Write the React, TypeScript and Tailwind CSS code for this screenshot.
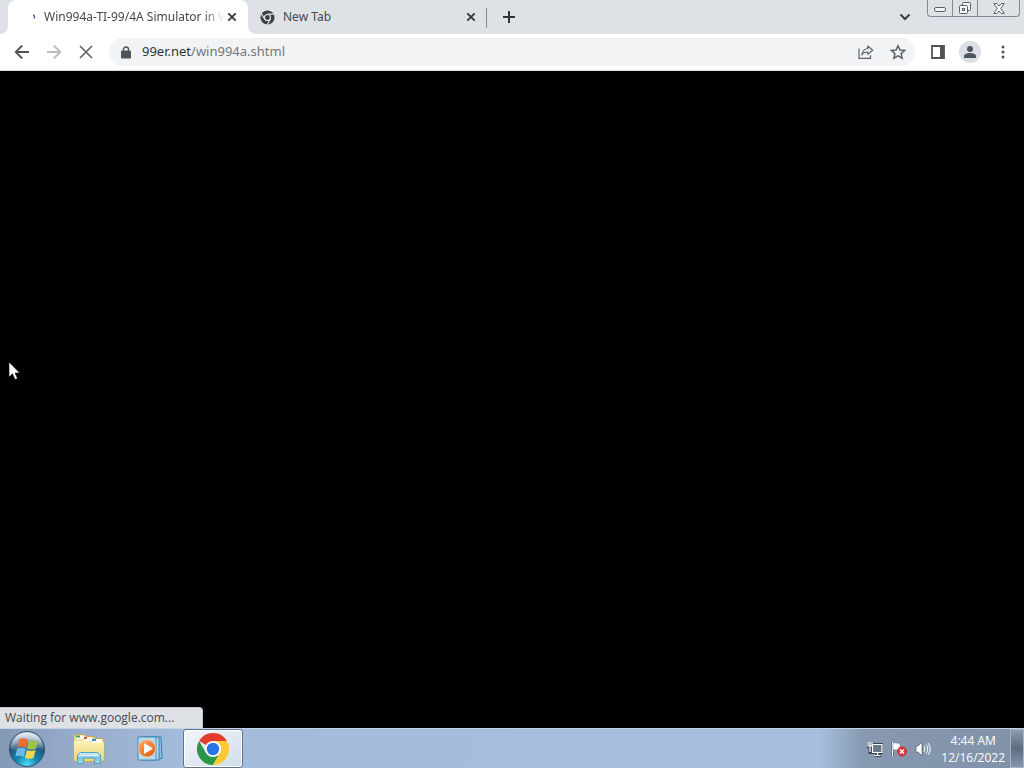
import type { ReactNode } from "react";

const stroke = {
  fill: "none",
  stroke: "currentColor",
  strokeWidth: 2,
} as const;

function IconButton({ label, className, children }: { label: string; className: string; children: ReactNode }) {
  return (
    <button type="button" aria-label={label} className={`flex shrink-0 items-center justify-center ${className}`}>
      {children}
    </button>
  );
}

function CloseIcon() {
  return (
    <svg width="10" height="10" viewBox="0 0 10 10" {...stroke}>
      <path d="M1.3 1.3l7.4 7.4M8.7 1.3L1.3 8.7" strokeWidth="1.8" />
    </svg>
  );
}

function TabStrip() {
  return (
    <header className="flex h-[34px] shrink-0 items-start bg-[#dee1e6] pl-2 font-['Noto_Sans',sans-serif] text-xs text-[#45484d]">
      <div className="relative flex h-full w-60 shrink-0 items-center rounded-t-lg bg-white pr-[11px] pl-[24px]">
        <svg className="absolute bottom-0 -left-2" width="8" height="8" viewBox="0 0 8 8">
          <path d="M8 0v8H0a8 8 0 0 0 8-8z" fill="#fff" />
        </svg>
        <svg className="absolute -right-2 bottom-0" width="8" height="8" viewBox="0 0 8 8">
          <path d="M0 0v8h8a8 8 0 0 1-8-8z" fill="#fff" />
        </svg>
        <svg className="mr-2 shrink-0" width="4" height="8" viewBox="0 0 4 8">
          <path d="M1.3 1.5c1 1 1.3 2.200 1.200 4" fill="none" stroke="#3568ae" strokeWidth="1.500" />
        </svg>
        <span className="min-w-0 flex-1 overflow-hidden whitespace-nowrap [mask-image:linear-gradient(to_right,black_calc(100%-20px),transparent)]">
          Win994a-TI-99/4A Simulator in W
        </span>
        <IconButton label="Close tab" className="ml-[3px] h-4 w-[10px] text-[#33363a]">
          <CloseIcon />
        </IconButton>
      </div>
      <div className="flex h-full w-[238px] shrink-0 items-center pr-[10px] pl-3">
        <svg className="mr-2 shrink-0" width="15" height="15" viewBox="0 0 16 16">
          <circle cx="8" cy="8" r="7.500" fill="#3c4043" />
          <circle cx="8" cy="8" r="3.200" fill="#3c4043" stroke="#dee1e6" strokeWidth="1.300" />
          <path d="M8 4.500h7.200M5 9.800L1.300 3.600M11 9.800L7.400 16" fill="none" stroke="#dee1e6" strokeWidth="1.300" />
        </svg>
        <span className="flex-1">New Tab</span>
        <IconButton label="Close New Tab" className="h-4 w-[10px] text-[#33363a]">
          <CloseIcon />
        </IconButton>
      </div>
      <div className="mt-2 h-5 w-px bg-[#85888c]" />
      <IconButton label="New tab" className="h-[34px] w-11 text-[#303337]">
        <svg width="12" height="12" viewBox="0 0 12 12" {...stroke}>
          <path d="M6 0v12M0 6h12" />
        </svg>
      </IconButton>
      <div className="flex-1" />
      <IconButton label="Search tabs" className="mr-4 h-[34px] w-3 text-[#3c4043]">
        <svg width="12" height="8" viewBox="0 0 12 8" {...stroke}>
          <path d="M1.500 1.500L6 6l4.500-4.500" />
        </svg>
      </IconButton>
      <div className="mr-1 flex h-[17px] w-[93px] rounded-b-[4px] border border-t-0 border-[#85898f] text-[#5b6067]">
        <IconButton label="Minimize" className="w-[25px] border-r border-[#85898f]">
          <svg className="mt-1" width="12" height="6" viewBox="0 0 12 6">
            <rect x=".5" y=".5" width="11" height="4" rx="1.500" fill="#f4f5f7" stroke="currentColor" />
          </svg>
        </IconButton>
        <IconButton label="Restore" className="w-[25px] border-r border-[#85898f]">
          <svg width="14" height="14" viewBox="0 0 14 14" fill="#f4f5f7" stroke="currentColor">
            <rect x="4.500" y="1.500" width="8" height="8" rx="1" />
            <rect x="1.500" y="4.500" width="8" height="8" rx="1" />
            <rect x="4.500" y="7.500" width="2" height="2" />
          </svg>
        </IconButton>
        <IconButton label="Close window" className="flex-1">
          <svg width="12" height="11" viewBox="0 0 12 11" fill="#f4f5f7" stroke="currentColor">
            <path d="M.8.500h3L6 3 8.200.500h3L7.800 5.500l3.400 5h-3L6 8l-2.200 2.500h-3l3.400-5z" />
          </svg>
        </IconButton>
      </div>
    </header>
  );
}

function Toolbar() {
  return (
    <div className="flex h-[37px] shrink-0 items-center border-b border-[#d5d7da] bg-white pr-[19px] pl-[14px] text-[#5f6368]">
      <IconButton label="Back" className="h-7 w-4 text-[#505458]">
        <svg width="16" height="16" viewBox="0 0 16 16" {...stroke} strokeWidth="1.800">
          <path d="M15 8H2M8.200 1.500L1.700 8l6.500 6.500" />
        </svg>
      </IconButton>
      <IconButton label="Forward" className="ml-4 h-7 w-4 text-[#b9bbbe]">
        <svg width="16" height="16" viewBox="0 0 16 16" {...stroke} strokeWidth="1.800">
          <path d="M1 8h13M7.800 1.500L14.300 8l-6.500 6.500" />
        </svg>
      </IconButton>
      <IconButton label="Stop loading" className="ml-4 h-7 w-4">
        <svg width="14" height="14" viewBox="0 0 14 14" {...stroke} strokeWidth="1.700">
          <path d="M1 1l12 12M13 1L1 13" />
        </svg>
      </IconButton>
      <div className="ml-[15px] flex h-7 min-w-0 flex-1 items-center rounded-full bg-[#f1f3f4] pr-[9px] pl-3">
        <svg className="shrink-0" width="10" height="13" viewBox="0 0 10 13">
          <path d="M2.500 5V3.500a2.500 2.500 0 0 1 5 0V5" fill="none" stroke="#505458" strokeWidth="1.400" />
          <rect x="0" y="4.500" width="10" height="8" rx="1" fill="#505458" />
        </svg>
        <a
          href="#address"
          className="ml-[11px] flex-1 font-['Noto_Sans',sans-serif] text-[13px] whitespace-nowrap text-[#73777b]"
        >
          <span className="text-[#303337]">99er.net</span>/win994a.shtml
        </a>
        <IconButton label="Share" className="h-7 w-4">
          <svg width="16" height="16" viewBox="0 0 16 16" {...stroke} strokeWidth="1.200">
            <path d="M1 4.500v9.800h11.500v-3" />
            <path d="M9.700 2l5 4.200-5 4.200V8C7 8 5 8.800 3.800 11 4.200 7.500 6 5 9.700 4.500z" strokeLinejoin="round" />
          </svg>
        </IconButton>
        <IconButton label="Bookmark" className="ml-4 h-7 w-4">
          <svg width="16" height="16" viewBox="0 0 16 16" {...stroke} strokeWidth="1.500">
            <path d="M8 1.800l1.900 4.300 4.700.400-3.500 3.100 1 4.600L8 11.800l-4.100 2.400 1-4.600L1.400 6.500l4.700-.400z" />
          </svg>
        </IconButton>
      </div>
      <IconButton label="Side panel" className="ml-4 h-7 w-[14px]">
        <svg width="14" height="14" viewBox="0 0 14 14">
          <path d="M1 1h12v12H1z" fill="none" stroke="#505458" strokeWidth="1.800" />
          <path d="M9 1h4v12H9z" fill="#505458" />
        </svg>
      </IconButton>
      <IconButton label="Profile" className="ml-[14px] h-[22px] w-[22px] rounded-full bg-[#dce0e6]">
        <svg width="14" height="14" viewBox="0 0 14 14" fill="#4b5561">
          <circle cx="7" cy="4" r="3" />
          <path d="M1 13v-2c0-2 3.500-3 6-3s6 1 6 3v2z" />
        </svg>
      </IconButton>
      <IconButton label="Menu" className="ml-[19px] h-7 w-[5px] text-[#505458]">
        <svg width="4" height="14" viewBox="0 0 4 14" fill="currentColor">
          <circle cx="2" cy="2" r="1.500" />
          <circle cx="2" cy="7" r="1.500" />
          <circle cx="2" cy="12" r="1.500" />
        </svg>
      </IconButton>
    </div>
  );
}

function StartOrb() {
  return (
    <svg width="38" height="38" viewBox="0 0 38 38">
      <defs>
        <radialGradient id="orb" cx=".5" cy=".95" r=".9">
          <stop offset="0" stopColor="#4fe0f2" />
          <stop offset=".35" stopColor="#1386b4" />
          <stop offset=".7" stopColor="#265478" />
          <stop offset="1" stopColor="#a8bdd0" />
        </radialGradient>
        <linearGradient id="orb-shine" x2="0" y2="1">
          <stop offset="0" stopColor="#fff" stopOpacity=".75" />
          <stop offset="1" stopColor="#fff" stopOpacity=".1" />
        </linearGradient>
      </defs>
      <circle cx="19" cy="19" r="17.500" fill="url(#orb)" stroke="#31516c" />
      <path d="M3 19C3 9 10 2.500 19 2.500S35 9 35 19c-9-3-22 4-32 0z" fill="url(#orb-shine)" />
      <path d="M11.500 9q4.500-1.800 8.500.7l-2 8.300q-4.200-2.500-8.500-.7z" fill="#ee6b30" />
      <path d="M21.200 10.300q4.300 2.300 8.800 0l-2 8.200q-4.300 2.300-8.800.1z" fill="#9cc544" />
      <path d="M9.200 18.700q4.300-1.800 8.500.6l-2 7.800q-4.200-2.300-8.500-.6z" fill="#6dbbea" />
      <path d="M18.900 19.900q4.300 2.200 8.700 0l-2 7.800q-4.300 2.200-8.700 0z" fill="#fdd651" />
    </svg>
  );
}

function ExplorerIcon() {
  return (
    <svg width="34" height="32" viewBox="0 0 34 32">
      <defs>
        <linearGradient id="folder" x2="0" y2="1">
          <stop offset="0" stopColor="#fdf5ba" />
          <stop offset="1" stopColor="#ead27b" />
        </linearGradient>
        <linearGradient id="stand" x2="0" y2="1">
          <stop offset="0" stopColor="#d8f4fb" />
          <stop offset=".5" stopColor="#79c5e5" />
          <stop offset="1" stopColor="#9cdaef" />
        </linearGradient>
      </defs>
      <path d="M1.500 4l2-2.500h9l2 2h7l2 2h7l1.500 2v20l-2 1H3l-1.500-2z" fill="#e8d27d" stroke="#c3a956" />
      <path d="M4 2.500h8v4H4z" fill="#f8faf6" />
      <path d="M4 2.500h4v2H4z" fill="#39a958" />
      <path d="M12 4h8v4h-8z" fill="#f8faf6" />
      <path d="M12 4h3v2h-3z" fill="#d5503d" />
      <path d="M20 6h10v4H20z" fill="#fff" />
      <path d="M20 6h4v2h-4z" fill="#3c8bc8" />
      <path d="M2 7.500h15l3 2h12v17.500H2z" fill="url(#folder)" />
      <path d="M5.500 30.500V22l3-2.500h17l3 2.500v8.500h-6V25h-11v5.500z" fill="url(#stand)" stroke="#559fc3" />
      <path d="M7 22.500h20" stroke="#fff" opacity=".7" />
    </svg>
  );
}

function MediaIcon() {
  return (
    <svg width="30" height="28" viewBox="0 0 30 28">
      <defs>
        <linearGradient id="media" x2=".8" y2="1">
          <stop offset="0" stopColor="#ffad60" />
          <stop offset="1" stopColor="#dc5f13" />
        </linearGradient>
      </defs>
      <path d="M8 2h17l1 21.500-16 1.500z" fill="#8cc4e3" stroke="#3780af" />
      <path d="M5 2h18v23H5z" fill="#b5dbed" stroke="#397fac" />
      <path d="M2 2h18v23H2z" fill="#b5dbed" stroke="#498eb8" />
      <circle cx="11" cy="13.500" r="8.500" fill="url(#media)" stroke="#f8bb87" />
      <path d="M8 8l9 5.500L8 19z" fill="#fff" />
    </svg>
  );
}

function ChromeIcon() {
  return (
    <svg width="32" height="32" viewBox="0 0 32 32">
      <path d="M16 16L2.140 8A16 16 0 0 1 29.860 8z" fill="#e33b2e" />
      <path d="M9.070 20L2.140 8A16 16 0 0 0 16 32l6.930-12z" fill="#289747" />
      <path d="M16 8h13.860a16 16 0 0 1-13.860 24l6.930-12z" fill="#fcc934" />
      <circle cx="16" cy="16" r="8" fill="#fff" />
      <circle cx="16" cy="16" r="6.200" fill="#2875e2" />
    </svg>
  );
}

function SystemTray() {
  return (
    <div className="flex h-full items-center">
      <IconButton label="Network" className="h-8 w-4">
        <svg width="16" height="16" viewBox="0 0 16 16">
          <path d="M5 3.500h10v8H5zM8 14.500h6M1 1.500v4h4v-4M3 5.500v6h2" fill="none" stroke="#364354" strokeWidth="3" />
          <path d="M5.500 3.500h9.500v8H5.500z" fill="#68798c" stroke="#fff" strokeWidth="1.200" />
          <path d="M10.500 11.500v3M7.500 14.500h6M1 1v4h4V1M3 1v10" fill="none" stroke="#fff" strokeWidth="1.200" />
        </svg>
      </IconButton>
      <IconButton label="Action center" className="ml-2 h-8 w-4">
        <svg width="16" height="16" viewBox="0 0 16 16">
          <path d="M1.500 1v14" stroke="#3b4858" strokeWidth="3" />
          <path d="M1.500 1v14" stroke="#fff" strokeWidth="1.500" />
          <path d="M2 2c3-1 4 1 7 0v7c-3 1-4-1-7 0z" fill="#fff" stroke="#66717d" strokeWidth=".5" />
          <circle cx="11" cy="10.500" r="4.700" fill="#d93636" stroke="#a52b2b" strokeWidth=".5" />
          <path d="M9 8.500l4 4m0-4l-4 4" stroke="#fff" strokeWidth="1.500" />
        </svg>
      </IconButton>
      <IconButton label="Volume" className="ml-2 h-8 w-4">
        <svg width="16" height="16" viewBox="0 0 16 16">
          <path d="M1 5h2l4-4v14l-4-4H1z" fill="#fff" stroke="#4c5969" strokeWidth=".7" />
          <path d="M9 5q2 3 0 6M11 3.500q3.500 4.500 0 9M13 2q4.500 6 0 12" fill="none" stroke="#fff" />
        </svg>
      </IconButton>
      <time dateTime="2022-12-16T04:44" className="ml-[10px] text-center text-xs leading-[17px] whitespace-nowrap text-white">
        <span className="block">4:44 AM</span>
        <span className="block">12/16/2022</span>
      </time>
      <button
        type="button"
        aria-label="Show desktop"
        className="ml-[5px] h-full w-[14px] border border-[#a5b4c4] bg-linear-to-b from-[#8c9bad] via-[#5d6e83] to-[#8295aa]"
      />
    </div>
  );
}

function Taskbar() {
  return (
    <footer className="flex h-10 shrink-0 items-center border-t border-[#c4d3e4] bg-[linear-gradient(to_right,#8398b4_0,#94a9c7_60px,#a4bcdc_180px,#a5bfdd_calc(100%-204px),#8799b0_calc(100%-160px),#8092aa_100%)] pl-2">
      <IconButton label="Start" className="h-[38px] w-[38px]">
        <StartOrb />
      </IconButton>
      <IconButton label="Windows Explorer" className="ml-[26px] h-[38px] w-[34px]">
        <ExplorerIcon />
      </IconButton>
      <IconButton label="Windows Media Player" className="ml-[30px] h-[38px] w-[30px]">
        <MediaIcon />
      </IconButton>
      <IconButton
        label="Google Chrome"
        className="ml-[17px] h-[39px] w-[60px] rounded-[3px] border border-[#61768e] bg-linear-to-br from-[#f3f6fa] to-[#d0ddec] shadow-[inset_0_0_0_1px_white]"
      >
        <ChromeIcon />
      </IconButton>
      <div className="flex-1" />
      <SystemTray />
    </footer>
  );
}

export default function App() {
  return (
    <div className="flex h-screen flex-col overflow-hidden font-['Open_Sans','Noto_Sans',sans-serif]">
      <TabStrip />
      <Toolbar />
      <main className="relative min-h-0 flex-1 bg-black">
        <div
          role="status"
          className="absolute bottom-0 left-0 h-[21px] w-[203px] rounded-tr-[4px] border-t border-r border-[#c1c4c8] bg-[#dee1e6] pl-[5px] text-xs leading-5 whitespace-nowrap text-[#474a50]"
        >
          Waiting for www.google.com...
        </div>
        <svg className="absolute top-[290px] left-2" width="13" height="20" viewBox="0 0 13 20">
          <path d="M1 1v15l3.500-3.200L7 18.500l2.500-1L7 12h4.700z" fill="#fff" stroke="#111" strokeWidth=".6" />
        </svg>
      </main>
      <Taskbar />
    </div>
  );
}
